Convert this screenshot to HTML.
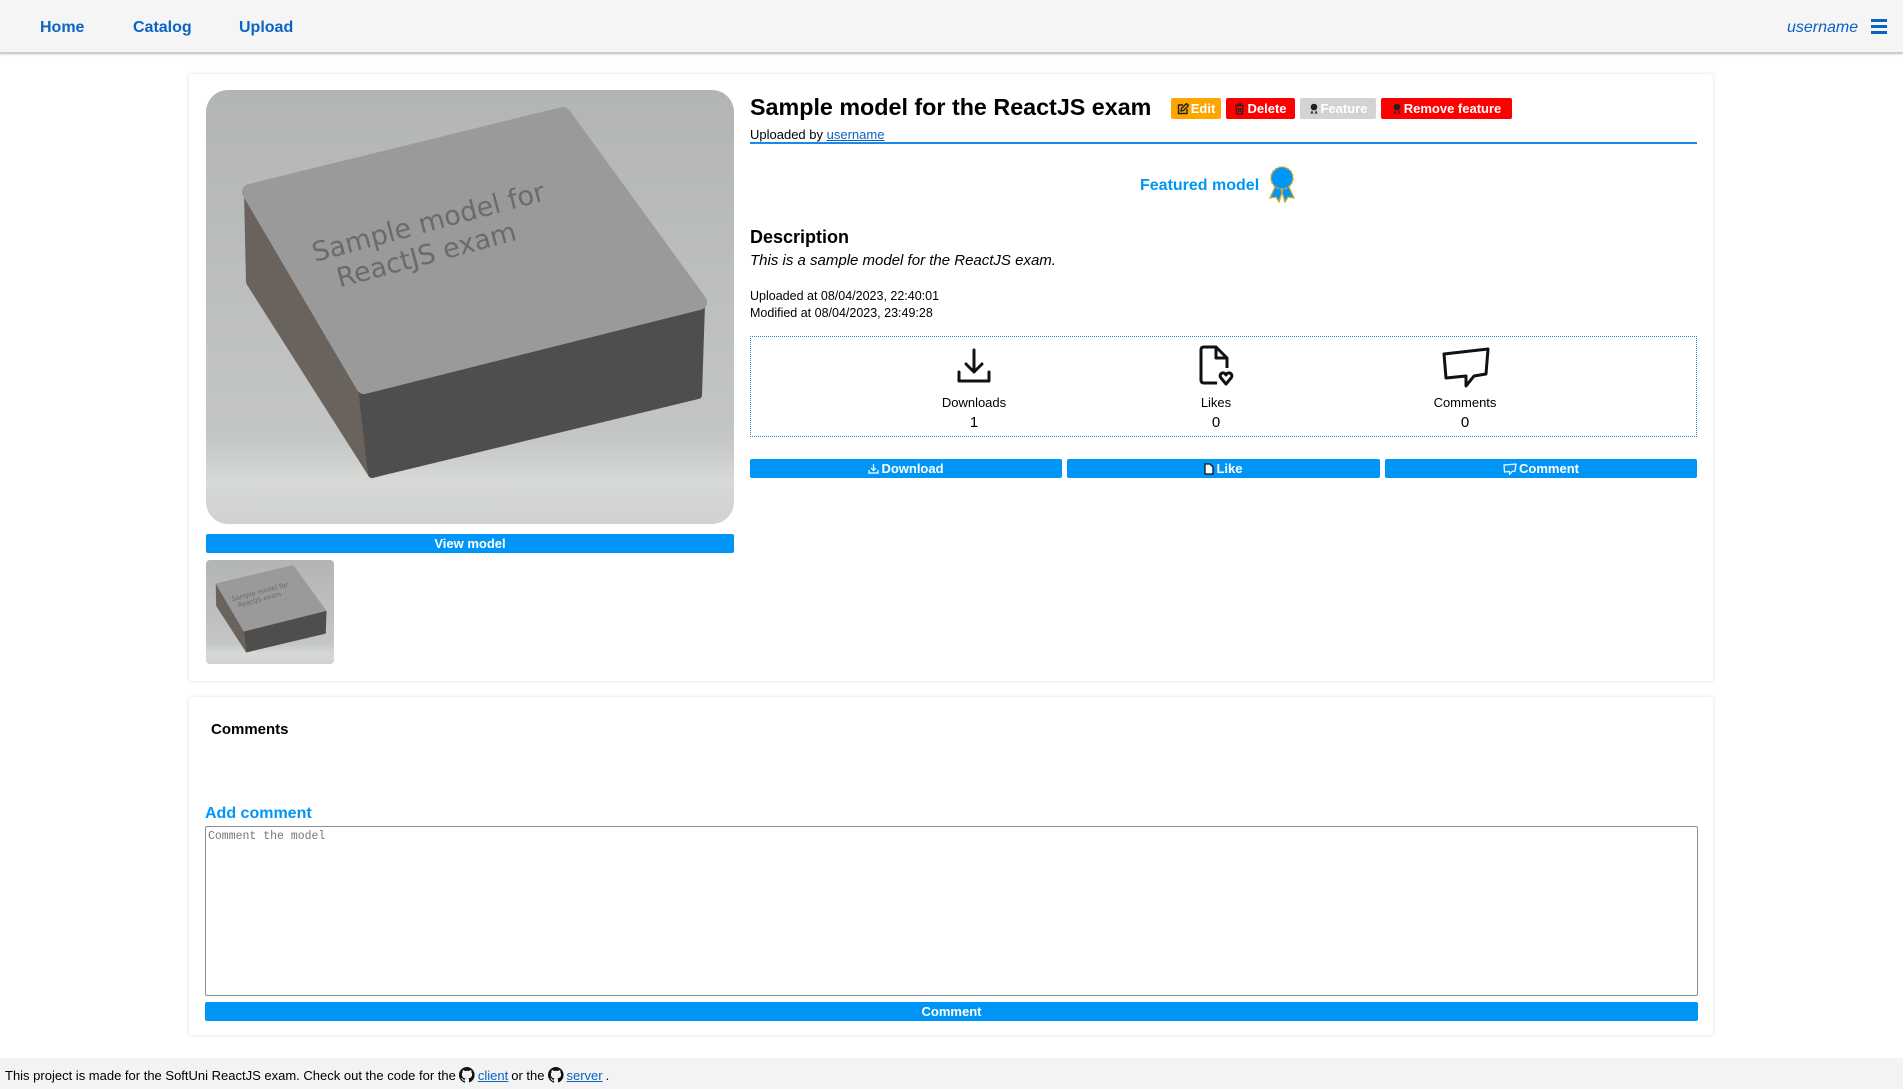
<!DOCTYPE html>
<html><head><meta charset="utf-8"><style>
*{box-sizing:border-box}
body{margin:0;width:1903px;height:1089px;position:relative;background:#fff;font-family:"Liberation Sans",sans-serif;overflow:hidden;color:#000}
.a{position:absolute}
nav{position:absolute;left:0;top:0;width:1903px;height:53px;background:#f5f5f6;box-shadow:0 1px 2px #bbb;border-bottom:1px solid #ccc}
nav .l{position:absolute;top:19px;font-weight:bold;font-size:16px;color:#0b63c4}
.card{position:absolute;background:#fff;box-shadow:0 0 4px rgba(0,0,0,.12);border-radius:2px}
.btn{position:absolute;background:#0096f7;color:#fff;font-weight:bold;font-size:13px;text-align:center;border-radius:2px;display:flex;align-items:center;justify-content:center;gap:2px}
.tb{position:absolute;top:98px;height:21px;color:#fff;font-weight:bold;font-size:13px;border-radius:2px;display:flex;align-items:center;justify-content:center;gap:2px}
.st{position:absolute;text-align:center;width:200px;font-size:13px}
</style></head><body>
<nav>
<span class="l" style="left:40px">Home</span>
<span class="l" style="left:133px">Catalog</span>
<span class="l" style="left:239px">Upload</span>
<span class="a" style="left:1787px;top:19px;font-style:italic;font-size:16px;color:#0b63c4">username</span>
<div class="a" style="left:1871px;top:19px;width:16px;height:3px;background:#0b63c4;box-shadow:0 6px 0 #0b63c4,0 12px 0 #0b63c4"></div>
</nav>

<div class="card" style="left:189px;top:74px;width:1524px;height:607px"></div>
<svg class="a" style="left:206px;top:90px;border-radius:22px" width="528" height="434" viewBox="206 90 528 434" preserveAspectRatio="none">
<defs><linearGradient id="bg" x1="0" y1="0" x2="0" y2="1"><stop offset="0" stop-color="#b2b5b3"/><stop offset=".8" stop-color="#c3c6c4"/><stop offset=".9" stop-color="#d6d9d6"/><stop offset="1" stop-color="#cfd2cf"/></linearGradient></defs>
<rect x="206" y="90" width="528" height="434" fill="url(#bg)"/>
<polygon points="248,192 362,388 372,474 250,282" fill="#6a625d" stroke="#6a625d" stroke-width="8" stroke-linejoin="round"/>
<polygon points="362,388 701,304 698,395 372,474" fill="#504e4c" stroke="#504e4c" stroke-width="8" stroke-linejoin="round"/>
<polygon points="250,192 563,115 699,302 364,386" fill="#9a9a9a" stroke="#9a9a9a" stroke-width="16" stroke-linejoin="round"/>
<g transform="rotate(-15 315 262)" fill="#6d6a67" font-family="DejaVu Sans,sans-serif" font-size="27"><text x="315" y="262">Sample model for</text><text x="332" y="293">ReactJS exam</text></g>
</svg>
<div class="btn" style="left:206px;top:534px;width:528px;height:19px">View model</div>
<svg class="a" style="left:206px;top:560px;border-radius:4px" width="128" height="104" viewBox="206 90 528 434" preserveAspectRatio="none">
<rect x="206" y="90" width="528" height="434" fill="url(#bg)"/>
<polygon points="246,188 362,388 372,476 248,282" fill="#6a625d"/>
<polygon points="362,388 703,302 700,397 372,476" fill="#504e4c"/>
<polygon points="246,188 565,111 703,302 362,388" fill="#9a9a9a"/>
<g transform="rotate(-15 315 262)" fill="#6d6a67" font-family="DejaVu Sans,sans-serif" font-size="27"><text x="315" y="262">Sample model for</text><text x="332" y="293">ReactJS exam</text></g>
</svg>

<div class="a" style="left:750px;top:94px;font-size:23.3px;font-weight:bold">Sample model for the ReactJS exam</div>
<div class="tb" style="left:1171px;width:50px;background:#ffa500"><svg width="12" height="12" viewBox="0 0 12 12"><path d="M6 2H1.5v8.5H10V6M4 8l.5-2.5 5-5 2 2-5 5z" fill="none" stroke="#222" stroke-width="1.4"/></svg>Edit</div>
<div class="tb" style="left:1226px;width:69px;background:#f00"><svg width="11" height="12" viewBox="0 0 11 12"><path d="M1 2.5h9M4 2.5V1h3v1.5M2 3l.7 8h5.6L9 3M4.5 5v4M6.5 5v4" fill="none" stroke="#222" stroke-width="1.3"/></svg>Delete</div>
<div class="tb" style="left:1300px;width:76px;background:#d3d3d3"><svg width="10" height="12" viewBox="0 0 10 12"><circle cx="5" cy="4" r="3.3" fill="#222"/><path d="M3 7l-1.5 4 2-.8 1 1M7 7l1.5 4-2-.8-1 1" fill="#222"/></svg>Feature</div>
<div class="tb" style="left:1381px;width:131px;background:#f00"><svg width="10" height="12" viewBox="0 0 10 12"><circle cx="5" cy="4" r="3.3" fill="#222"/><path d="M3 7l-1.5 4 2-.8 1 1M7 7l1.5 4-2-.8-1 1" fill="#222"/></svg>Remove feature</div>
<div class="a" style="left:750px;top:127px;font-size:13px">Uploaded by <span style="color:#0b63c4;text-decoration:underline">username</span></div>
<div class="a" style="left:750px;top:142px;width:947px;height:2px;background:#1e88e5"></div>

<div class="a" style="left:1140px;top:177px;font-size:16px;font-weight:bold;color:#0096f7">Featured model</div>
<svg class="a" style="left:1267px;top:165px" width="30" height="38" viewBox="0 0 30 38"><path d="M9 20l-6 13 6-1 3 5 4-13M21 20l6 13-6-1-3 5-4-13" fill="#0096f7" stroke="#d4a52a" stroke-width="1.3"/><circle cx="15" cy="13" r="11" fill="#0096f7" stroke="#d4a52a" stroke-width="1.5" stroke-dasharray="3 1"/></svg>

<div class="a" style="left:750px;top:227px;font-size:18px;font-weight:bold">Description</div>
<div class="a" style="left:750px;top:252px;font-size:15px;font-style:italic">This is a sample model for the ReactJS exam.</div>
<div class="a" style="left:750px;top:288px;font-size:12.5px;line-height:17px">Uploaded at 08/04/2023, 22:40:01<br>Modified at 08/04/2023, 23:49:28</div>

<div class="a" style="left:750px;top:336px;width:947px;height:101px;border:1px dotted #1e88e5"></div>
<svg class="a" style="left:954px;top:346px" width="40" height="40" viewBox="0 0 40 40" fill="none" stroke="#111" stroke-width="3" stroke-linecap="round" stroke-linejoin="round"><path d="M20 4v22M12 18l8 8 8-8M5 26v9h30v-9"/></svg>
<svg class="a" style="left:1198px;top:344px" width="36" height="42" viewBox="0 0 36 42" fill="none" stroke="#111" stroke-width="3" stroke-linejoin="round"><path d="M19 39H6q-3 0-3-3V6q0-3 3-3h12l11 11v10"/><path d="M18 3v11h11"/><path d="M28 40l-5-6a3 3 0 1 1 5-3 3 3 0 1 1 5 3z"/></svg>
<svg class="a" style="left:1441px;top:346px" width="50" height="42" viewBox="0 0 50 42" fill="none" stroke="#111" stroke-width="3" stroke-linejoin="round"><path d="M3 8l44-5-2 25-12 2-8 10v-10l-20 2z"/></svg>
<div class="st" style="left:874px;top:395px">Downloads</div><div class="st" style="left:874px;top:414px;font-size:15px">1</div>
<div class="st" style="left:1116px;top:395px">Likes</div><div class="st" style="left:1116px;top:414px;font-size:15px">0</div>
<div class="st" style="left:1365px;top:395px">Comments</div><div class="st" style="left:1365px;top:414px;font-size:15px">0</div>

<div class="btn" style="left:750px;top:459px;width:312px;height:19px"><svg width="11" height="11" viewBox="0 0 11 11" fill="none" stroke="#fff" stroke-width="1.2"><path d="M5.5 1v6M3 5l2.5 2.5L8 5M1 7v3h9V7"/></svg>Download</div>
<div class="btn" style="left:1067px;top:459px;width:313px;height:19px"><svg width="10" height="12" viewBox="0 0 10 12"><path d="M1 1h5l3 3v7H1z" fill="#fff" stroke="#111" stroke-width="1.3"/></svg>Like</div>
<div class="btn" style="left:1385px;top:459px;width:312px;height:19px"><svg width="14" height="12" viewBox="0 0 14 12" fill="none" stroke="#fff" stroke-width="1.2"><path d="M1 2l12-1-1 7-3 .5-2.5 3v-3L1.5 9z"/></svg>Comment</div>

<div class="card" style="left:189px;top:697px;width:1524px;height:338px"></div>
<div class="a" style="left:211px;top:721px;font-size:15px;font-weight:bold">Comments</div>
<div class="a" style="left:205px;top:805px;font-size:16px;font-weight:bold;color:#0096f7">Add comment</div>
<div class="a" style="left:205px;top:826px;width:1493px;height:170px;border:1px solid #8d8a99;border-radius:2px;font-family:'Liberation Mono',monospace;font-size:11.5px;color:#777;padding:3px 2px">Comment the model</div>
<div class="btn" style="left:205px;top:1002px;width:1493px;height:19px">Comment</div>

<div class="a" style="left:0;top:1058px;width:1903px;height:31px;background:#f3f3f3"></div>
<div class="a" style="left:5px;top:1067px;font-size:13px;display:flex;align-items:center;gap:3px">This project is made for the SoftUni ReactJS exam. Check out the code for the <svg width="16" height="16" viewBox="0 0 16 16"><path fill="#111" d="M8 0a8 8 0 0 0-2.5 15.6c.4 0 .5-.2.5-.4v-1.5c-2.2.5-2.7-1-2.7-1-.4-.9-.9-1.2-.9-1.2-.7-.5.1-.5.1-.5.8.1 1.2.8 1.2.8.7 1.3 1.9.9 2.300.7.1-.5.3-.9.5-1.1-1.800-.2-3.6-.9-3.6-4 0-.9.3-1.600.8-2.1-.1-.2-.4-1 .1-2.1 0 0 .7-.2 2.2.8a7.5 7.5 0 0 1 4 0c1.5-1 2.2-.8 2.2-.8.4 1.1.2 1.9.1 2.1.5.6.8 1.3.8 2.1 0 3.1-1.9 3.7-3.6 3.9.3.3.5.8.5 1.5v2.2c0 .2.1.5.6.4A8 8 0 0 0 8 0z"/></svg><span style="color:#0b63c4;text-decoration:underline">client</span> or the <svg width="16" height="16" viewBox="0 0 16 16"><path fill="#111" d="M8 0a8 8 0 0 0-2.5 15.6c.4 0 .5-.2.5-.4v-1.5c-2.2.5-2.7-1-2.7-1-.4-.9-.9-1.2-.9-1.2-.7-.5.1-.5.1-.5.8.1 1.2.8 1.2.8.7 1.3 1.9.9 2.3.7.1-.5.3-.9.5-1.1-1.8-.2-3.6-.9-3.6-4 0-.9.3-1.6.8-2.1-.1-.2-.4-1 .1-2.1 0 0 .7-.2 2.2.8a7.5 7.5 0 0 1 4 0c1.5-1 2.2-.8 2.2-.8.4 1.1.2 1.9.1 2.1.5.6.8 1.3.8 2.1 0 3.1-1.9 3.7-3.6 3.9.3.3.5.8.5 1.5v2.2c0 .2.1.5.6.4A8 8 0 0 0 8 0z"/></svg><span style="color:#0b63c4;text-decoration:underline">server</span>.</div>
</body></html>
